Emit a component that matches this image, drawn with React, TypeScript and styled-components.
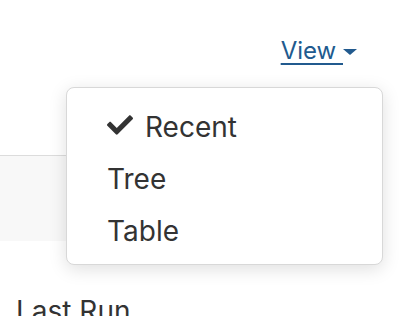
import React from 'react';
import styled, { createGlobalStyle } from 'styled-components';
import { FaCheck } from 'react-icons/fa';

const GlobalStyle = createGlobalStyle`
    html, body {
        margin: 0;
        padding: 0;
        background: #ffffff;
        font-family: Inter, 'Noto Sans', 'Liberation Sans', sans-serif;
    }
`

const Page = styled.div`
    position: relative;
    width: 418px;
    height: 316px;
    overflow: hidden;
    background: #ffffff;
`

const Header = styled.div`
    height: 155px;
    box-sizing: border-box;
    display: flex;
    justify-content: flex-end;
    align-items: flex-start;
    padding: 36px 61px 0 0;
`

const ViewLink = styled.a`
    display: flex;
    align-items: center;
    font-size: 24px;
    line-height: 29px;
    color: #215a8e;
    cursor: pointer;
`

const ViewLabel = styled.span`
    text-decoration: underline;
    text-decoration-thickness: 2px;
    text-underline-offset: 4px;
    white-space: pre;
`

const Caret = styled.span`
    width: 0;
    height: 0;
    margin-top: 2px;
    border-left: 7px solid transparent;
    border-right: 7px solid transparent;
    border-top: 6px solid #215a8e;
`

const Band = styled.div`
    width: 380px;
    height: 85px;
    border-top: 1px solid #dcdcdc;
    background: #f8f8f8;
`

const SectionTitle = styled.div`
    margin: 53px 0 0 16px;
    font-size: 28px;
    line-height: 34px;
    color: #333333;
`

const Menu = styled.ul`
    position: absolute;
    left: 66px;
    top: 87px;
    width: 317px;
    height: 178px;
    box-sizing: border-box;
    margin: 0;
    padding: 13px 0 0 40px;
    list-style: none;
    background: #ffffff;
    border: 1px solid #d8d8d8;
    border-radius: 8px;
    box-shadow: 0 4px 18px rgba(0, 0, 0, 0.13);
`

const MenuItem = styled.li`
    display: flex;
    align-items: center;
    gap: 12px;
    height: 52px;
    font-size: 28px;
    line-height: 52px;
    color: #333333;
    cursor: pointer;

    svg {
        width: 26px;
        height: 26px;
        margin-top: -4px;
        color: #333333;
    }
`

const items = [
    { label: 'Recent', checked: true },
    { label: 'Tree', checked: false },
    { label: 'Table', checked: false },
];

const App: React.FC = () => {
    return (
        <>
            <GlobalStyle />
            <Page>
                <Header>
                    <ViewLink>
                        <ViewLabel>View </ViewLabel>
                        <Caret />
                    </ViewLink>
                </Header>
                <Band />
                <SectionTitle>Last Run</SectionTitle>
                <Menu>
                    {items.map((item) => (
                        <MenuItem key={item.label}>
                            {item.checked && <FaCheck />}
                            {item.label}
                        </MenuItem>
                    ))}
                </Menu>
            </Page>
        </>
    );
}

export default App;
